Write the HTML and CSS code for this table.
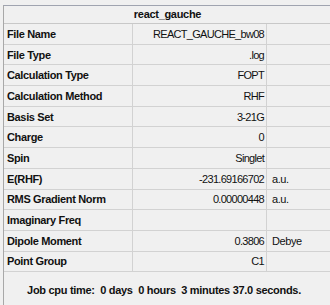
FILE: index.html
```html
<!DOCTYPE html>
<html>
<head>
<meta charset="utf-8">
<link rel="stylesheet" href="styles.css">
</head>
<body>
<div class="panel">
  <div class="table">
    <div class="title">react_gauche</div>
    <div class="row"><div class="lbl">File Name</div><div class="val">REACT_GAUCHE_bw08</div><div class="unit"></div></div>
    <div class="row"><div class="lbl">File Type</div><div class="val">.log</div><div class="unit"></div></div>
    <div class="row"><div class="lbl">Calculation Type</div><div class="val">FOPT</div><div class="unit"></div></div>
    <div class="row"><div class="lbl">Calculation Method</div><div class="val">RHF</div><div class="unit"></div></div>
    <div class="row"><div class="lbl">Basis Set</div><div class="val">3-21G</div><div class="unit"></div></div>
    <div class="row"><div class="lbl">Charge</div><div class="val">0</div><div class="unit"></div></div>
    <div class="row"><div class="lbl">Spin</div><div class="val">Singlet</div><div class="unit"></div></div>
    <div class="row"><div class="lbl">E(RHF)</div><div class="val">-231.69166702</div><div class="unit">a.u.</div></div>
    <div class="row"><div class="lbl">RMS Gradient Norm</div><div class="val">0.00000448</div><div class="unit">a.u.</div></div>
    <div class="row"><div class="lbl">Imaginary Freq</div><div class="val"></div><div class="unit"></div></div>
    <div class="row"><div class="lbl">Dipole Moment</div><div class="val">0.3806</div><div class="unit">Debye</div></div>
    <div class="row"><div class="lbl">Point Group</div><div class="val">C1</div><div class="unit"></div></div>
  </div>
  <div class="job">Job cpu time:&nbsp; 0 days&nbsp; 0 hours&nbsp; 3 minutes 37.0 seconds.</div>
</div>
</body>
</html>
```
FILE: styles.css
```css
html, body {
  margin: 0;
  padding: 0;
  background: #f0f0f0;
  overflow: hidden;
}
body {
  font-family: "Liberation Sans", Arial, sans-serif;
  font-size: 11px;
  color: #111;
}
.panel {
  margin: 5px 0 0 3px;
  height: 300px;
  border-left: 1px solid #a8a8a8;
  border-top: 1px solid #a0a4b0;
  box-sizing: border-box;
}
.table {
  width: 340px;
}
.title {
  height: 17px;
  line-height: 17px;
  text-align: center;
  font-weight: bold;
  letter-spacing: -0.3px;
  padding-right: 13px;
  border-bottom: 1px solid #c8c8c8;
  box-sizing: content-box;
}
.row {
  display: grid;
  grid-template-columns: 129px 134px 1fr;
  height: 20.7px;
  box-sizing: border-box;
  border-bottom: 1px solid #d2d2d2;
  align-items: center;
}
.row > div {
  height: 100%;
  display: flex;
  align-items: center;
  box-sizing: border-box;
  white-space: nowrap;
}
.lbl {
  font-weight: bold;
  letter-spacing: -0.35px;
  padding-left: 3px;
  border-right: 1px solid #d2d2d2;
}
.val {
  justify-content: flex-end;
  padding-right: 2px;
  letter-spacing: -0.7px;
  border-right: 1px solid #d2d2d2;
}
.unit {
  padding-left: 5px;
  letter-spacing: -0.4px;
}
.job {
  font-weight: bold;
  text-align: center;
  letter-spacing: -0.3px;
  padding-top: 12px;
  padding-right: 6px;
  line-height: 13px;
}
```
